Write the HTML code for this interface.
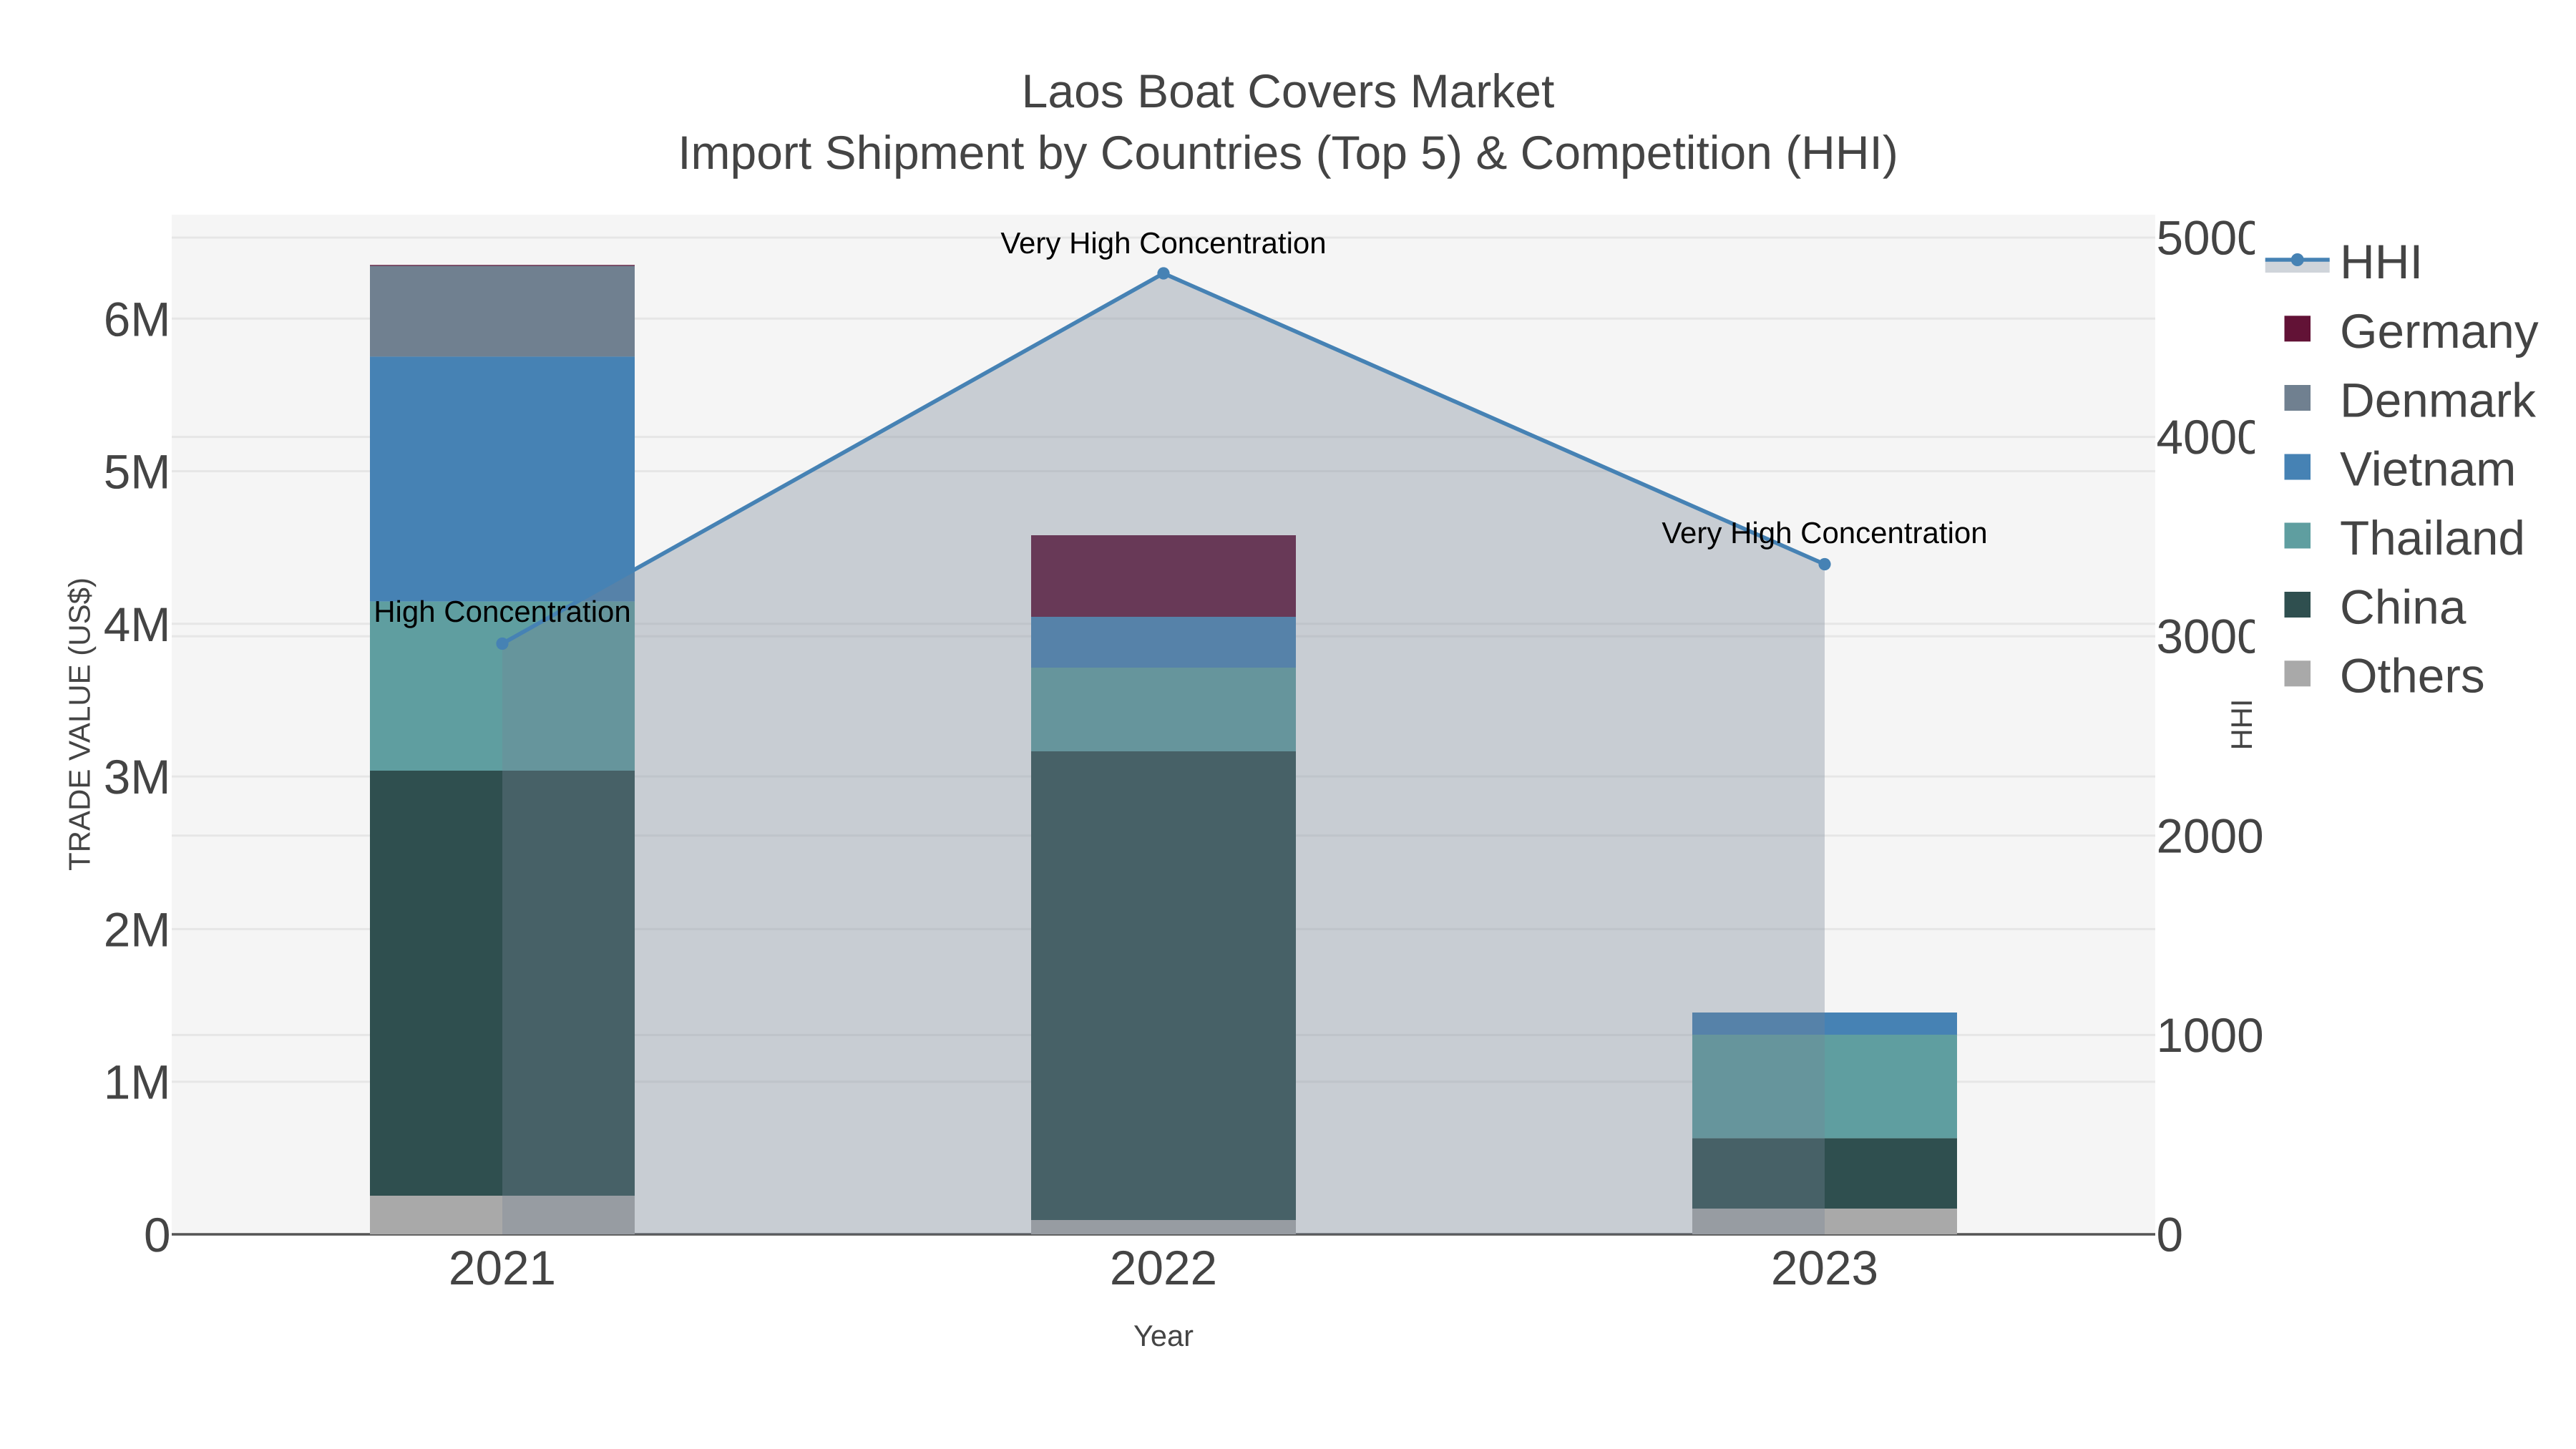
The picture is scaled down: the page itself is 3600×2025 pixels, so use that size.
<!DOCTYPE html>
<html>
<head>
<meta charset="utf-8">
<title>Laos Boat Covers Market</title>
<style>
html,body{margin:0;padding:0;background:#fff;width:3600px;height:2025px;overflow:hidden}
svg{display:block}
text{font-family:"Liberation Sans",Arial,sans-serif;text-rendering:geometricPrecision;fill:#444}
.t{font-size:66px}
.k{font-size:67.5px}
.a{font-size:41.6px}
.n{font-size:42px;fill:#000}
</style>
</head>
<body>
<svg width="3600" height="2025" viewBox="0 0 3600 2025" xmlns="http://www.w3.org/2000/svg">
<rect width="3600" height="2025" fill="#fff"/>
<rect x="240" y="300" width="2772" height="1425" fill="#f5f5f5"/>
<!-- gridlines -->
<g stroke="#e6e6e6" stroke-width="3">
<line x1="240" x2="3012" y1="1511.7" y2="1511.7"/>
<line x1="240" x2="3012" y1="1298.4" y2="1298.4"/>
<line x1="240" x2="3012" y1="1085.1" y2="1085.1"/>
<line x1="240" x2="3012" y1="871.8" y2="871.8"/>
<line x1="240" x2="3012" y1="658.5" y2="658.5"/>
<line x1="240" x2="3012" y1="445.2" y2="445.2"/>
<line x1="240" x2="3012" y1="1446.4" y2="1446.4"/>
<line x1="240" x2="3012" y1="1167.8" y2="1167.8"/>
<line x1="240" x2="3012" y1="889.2" y2="889.2"/>
<line x1="240" x2="3012" y1="610.6" y2="610.6"/>
<line x1="240" x2="3012" y1="332" y2="332"/>
</g>
<line x1="240" x2="3012" y1="1725" y2="1725" stroke="#555" stroke-width="3.4"/>
<!-- bars 2021 -->
<rect x="517" y="370.3" width="370" height="1.2" fill="#621236"/>
<rect x="517" y="371.5" width="370" height="126.9" fill="#708090"/>
<rect x="517" y="498.4" width="370" height="342.2" fill="#4682b4"/>
<rect x="517" y="840.6" width="370" height="236.4" fill="#5f9ea0"/>
<rect x="517" y="1077" width="370" height="594" fill="#2f4f4f"/>
<rect x="517" y="1671" width="370" height="54" fill="#a9a9a9"/>
<!-- bars 2022 -->
<rect x="1441" y="748" width="370" height="114" fill="#621236"/>
<rect x="1441" y="862" width="370" height="71" fill="#4682b4"/>
<rect x="1441" y="933" width="370" height="117" fill="#5f9ea0"/>
<rect x="1441" y="1050" width="370" height="655" fill="#2f4f4f"/>
<rect x="1441" y="1705" width="370" height="20" fill="#a9a9a9"/>
<!-- bars 2023 -->
<rect x="2365" y="1415" width="370" height="31" fill="#4682b4"/>
<rect x="2365" y="1446" width="370" height="144.7" fill="#5f9ea0"/>
<rect x="2365" y="1590.7" width="370" height="98.3" fill="#2f4f4f"/>
<rect x="2365" y="1689" width="370" height="36" fill="#a9a9a9"/>
<!-- HHI area -->
<polygon points="702,899.5 1626,382 2550,788.5 2550,1725 702,1725" fill="rgb(118,131,150)" fill-opacity="0.35"/>
<polyline points="702,899.5 1626,382 2550,788.5" fill="none" stroke="#4682b4" stroke-width="5.6" stroke-linejoin="round"/>
<circle cx="702" cy="899.5" r="8.6" fill="#4682b4"/>
<circle cx="1626" cy="382" r="8.6" fill="#4682b4"/>
<circle cx="2550" cy="788.5" r="8.6" fill="#4682b4"/>
<!-- annotations -->
<text class="n" x="702" y="869" text-anchor="middle">High Concentration</text>
<text class="n" x="1626" y="354" text-anchor="middle">Very High Concentration</text>
<text class="n" x="2550" y="759" text-anchor="middle">Very High Concentration</text>
<!-- title -->
<text class="t" x="1800" y="150" text-anchor="middle">Laos Boat Covers Market</text>
<text class="t" x="1800" y="236" text-anchor="middle">Import Shipment by Countries (Top 5) &amp; Competition (HHI)</text>
<!-- left ticks -->
<text class="k" x="238.5" y="469.5" text-anchor="end">6M</text>
<text class="k" x="238.5" y="682.7" text-anchor="end">5M</text>
<text class="k" x="238.5" y="896" text-anchor="end">4M</text>
<text class="k" x="238.5" y="1109.2" text-anchor="end">3M</text>
<text class="k" x="238.5" y="1322.5" text-anchor="end">2M</text>
<text class="k" x="238.5" y="1535.7" text-anchor="end">1M</text>
<text class="k" x="238.5" y="1749" text-anchor="end">0</text>
<!-- x ticks -->
<text class="k" x="702" y="1795" text-anchor="middle">2021</text>
<text class="k" x="1626" y="1795" text-anchor="middle">2022</text>
<text class="k" x="2550" y="1795" text-anchor="middle">2023</text>
<text class="a" x="1626" y="1881" text-anchor="middle">Year</text>
<!-- axis titles -->
<text class="a" style="font-size:42px" transform="translate(125.7 1012) rotate(-90)" text-anchor="middle">TRADE VALUE (US$)</text>
<!-- right ticks -->
<text class="k" x="3013.5" y="355.5">5000</text>
<text class="k" x="3013.5" y="634">4000</text>
<text class="k" x="3013.5" y="912.7">3000</text>
<text class="k" x="3013.5" y="1191.3">2000</text>
<text class="k" x="3013.5" y="1470">1000</text>
<text class="k" x="3013.5" y="1748.5">0</text>
<!-- legend background clipping ticks -->
<rect x="3151" y="300" width="449" height="720" fill="#fff"/>
<text class="a" transform="translate(3147 1012.5) rotate(-90)" text-anchor="middle">HHI</text>
<!-- legend -->
<rect x="3165.7" y="363" width="90" height="18" fill="rgb(118,131,150)" fill-opacity="0.35"/>
<line x1="3165.7" x2="3255.7" y1="363" y2="363" stroke="#4682b4" stroke-width="5.6"/>
<circle cx="3210.7" cy="363" r="9" fill="#4682b4"/>
<rect x="3192.5" y="441.3" width="36.5" height="36" fill="#621236"/>
<rect x="3192.5" y="538" width="36.5" height="36" fill="#708090"/>
<rect x="3192.5" y="634.5" width="36.5" height="36" fill="#4682b4"/>
<rect x="3192.5" y="730.5" width="36.5" height="36" fill="#5f9ea0"/>
<rect x="3192.5" y="827" width="36.5" height="36" fill="#2f4f4f"/>
<rect x="3192.5" y="923.3" width="36.5" height="36" fill="#a9a9a9"/>
<text class="k" x="3270" y="389">HHI</text>
<text class="k" x="3270" y="486">Germany</text>
<text class="k" x="3270" y="582.3">Denmark</text>
<text class="k" x="3270" y="678.6">Vietnam</text>
<text class="k" x="3270" y="775">Thailand</text>
<text class="k" x="3270" y="871.3">China</text>
<text class="k" x="3270" y="967.6">Others</text>
</svg>
</body>
</html>
